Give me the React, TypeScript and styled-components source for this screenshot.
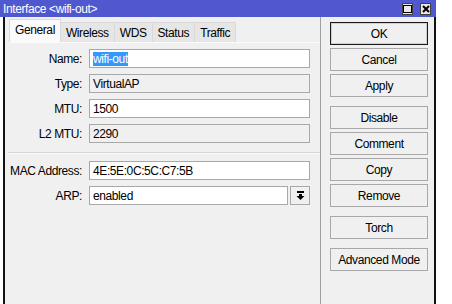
import React from 'react'
import styled, { createGlobalStyle } from 'styled-components'

const GlobalStyle = createGlobalStyle`
  body {
    margin: 0;
    background: #ffffff;
    font-family: 'Liberation Sans', Arial, sans-serif;
    font-size: 12px;
    letter-spacing: -0.4px;
    color: #000;
  }
`

const Window = styled.div`
  width: 436px;
  height: 304px;
  display: flex;
  flex-direction: column;
  background: #ffffff;
`

const TitleBar = styled.div`
  height: 17px;
  flex: none;
  display: flex;
  align-items: center;
  padding-left: 3px;
  padding-right: 5px;
  background: #5058d0;
  color: #ffffff;
`

const TitleText = styled.span`
  flex: 1;
`

const TitleButtons = styled.div`
  display: flex;
  gap: 7px;
`

const TitleButton = styled.div`
  width: 11px;
  height: 12px;
  box-sizing: border-box;
  border: 1px solid #404040;
  background: #e8e8e8;
  display: flex;
  align-items: center;
  justify-content: center;
`

const Body = styled.div`
  flex: 1;
  margin-left: 3px;
  border-left: 2px solid #111;
  border-right: 2px solid #111;
  background: #f0f0f0;
  display: flex;
`

const LeftSide = styled.div`
  width: 315px;
  display: flex;
  flex-direction: column;
  border-right: 1px solid #a0a0a0;
`

const TabStrip = styled.div`
  display: flex;
  align-items: flex-end;
  height: 25px;
  padding-left: 4px;
`

const Tab = styled.div<{ $active?: boolean }>`
  height: ${(p) => (p.$active ? 23 : 20)}px;
  box-sizing: border-box;
  padding: 0 5px;
  display: flex;
  align-items: center;
  border: 1px solid #d9d9d9;
  border-bottom: none;
  border-left: ${(p) => (p.$active ? '1px solid #d9d9d9' : 'none')};
  background: ${(p) => (p.$active ? '#fafafa' : '#e6e6e6')};
  padding-bottom: ${(p) => (p.$active ? 2 : 0)}px;
`

const Panel = styled.div`
  flex: 1;
  margin-left: 4px;
  border-top: 1px solid #fbfbfb;
  padding-top: 6px;
  display: flex;
  flex-direction: column;
`

const Group = styled.div`
  display: flex;
  flex-direction: column;
  gap: 6px;
`

const Row = styled.div`
  display: flex;
  align-items: center;
  height: 19px;
`

const Label = styled.div`
  width: 73px;
  text-align: right;
  padding-right: 7px;
`

const Field = styled.div<{ $readonly?: boolean; $w?: number }>`
  width: ${(p) => p.$w ?? 221}px;
  height: 19px;
  box-sizing: border-box;
  border: 1px solid #a8a8a8;
  background: ${(p) => (p.$readonly ? '#f0f0f0' : '#ffffff')};
  display: flex;
  align-items: center;
  padding-left: 3px;
  white-space: nowrap;
`

const Selected = styled.span`
  background: #3399ff;
  color: #ffffff;
`

const DropButton = styled.div`
  width: 20px;
  height: 19px;
  margin-left: 2px;
  box-sizing: border-box;
  border: 1px solid #a8a8a8;
  background: #f0f0f0;
  display: flex;
  align-items: center;
  justify-content: center;
`

const Separator = styled.div`
  height: 1px;
  margin: 9px 0 7px -1px;
  background: #d4d4d4;
  border-bottom: 1px solid #fbfbfb;
`

const ButtonColumn = styled.div`
  flex: 1;
  padding: 5px 5px 0 9px;
  display: flex;
  flex-direction: column;
  gap: 3px;
`

const Button = styled.div<{ $default?: boolean; $gap?: boolean }>`
  height: 23px;
  width: 98px;
  box-sizing: border-box;
  border: 1px solid ${(p) => (p.$default ? '#1a1a1a' : '#a8a8a8')};
  box-shadow: ${(p) => (p.$default ? 'inset 0 0 0 1px #d0d0d0' : 'none')};
  background: #f0f0f0;
  display: flex;
  align-items: center;
  justify-content: center;
  margin-top: ${(p) => (p.$gap ? 6 : 0)}px;
`

const fields = [
  { label: 'Type:', value: 'VirtualAP', readonly: true },
  { label: 'MTU:', value: '1500' },
  { label: 'L2 MTU:', value: '2290', readonly: true },
]

const buttons = [
  { text: 'OK', def: true },
  { text: 'Cancel' },
  { text: 'Apply' },
  { text: 'Disable', gap: true },
  { text: 'Comment' },
  { text: 'Copy' },
  { text: 'Remove' },
  { text: 'Torch', gap: true },
  { text: 'Advanced Mode', gap: true },
]

export default function App() {
  return (
    <>
      <GlobalStyle />
      <Window>
        <TitleBar>
          <TitleText>Interface &lt;wifi-out&gt;</TitleText>
          <TitleButtons>
            <TitleButton>
              <svg width="9" height="8" viewBox="0 0 9 8">
                <rect x="0.5" y="0.5" width="8" height="7" fill="none" stroke="#000" />
              </svg>
            </TitleButton>
            <TitleButton>
              <svg width="8" height="8" viewBox="0 0 8 8">
                <path d="M1 1 L7 7 M7 1 L1 7" stroke="#000" strokeWidth="2" />
              </svg>
            </TitleButton>
          </TitleButtons>
        </TitleBar>
        <Body>
          <LeftSide>
            <TabStrip>
              <Tab $active>General</Tab>
              <Tab>Wireless</Tab>
              <Tab>WDS</Tab>
              <Tab>Status</Tab>
              <Tab>Traffic</Tab>
            </TabStrip>
            <Panel>
              <Group>
                <Row>
                  <Label>Name:</Label>
                  <Field>
                    <Selected>wifi-out</Selected>
                  </Field>
                </Row>
                {fields.map((f) => (
                  <Row key={f.label}>
                    <Label>{f.label}</Label>
                    <Field $readonly={f.readonly}>{f.value}</Field>
                  </Row>
                ))}
              </Group>
              <Separator />
              <Group>
                <Row>
                  <Label>MAC Address:</Label>
                  <Field>4E:5E:0C:5C:C7:5B</Field>
                </Row>
                <Row>
                  <Label>ARP:</Label>
                  <Field $w={199}>enabled</Field>
                  <DropButton>
                    <svg width="9" height="9" viewBox="0 0 9 9">
                      <rect x="1" y="0" width="7" height="2" fill="#000" />
                      <rect x="3" y="3" width="3" height="2" fill="#000" />
                      <path d="M0.5 5 L8.5 5 L4.5 9 Z" fill="#000" />
                    </svg>
                  </DropButton>
                </Row>
              </Group>
            </Panel>
          </LeftSide>
          <ButtonColumn>
            {buttons.map((b) => (
              <Button key={b.text} $default={b.def} $gap={b.gap}>
                {b.text}
              </Button>
            ))}
          </ButtonColumn>
        </Body>
      </Window>
    </>
  )
}
